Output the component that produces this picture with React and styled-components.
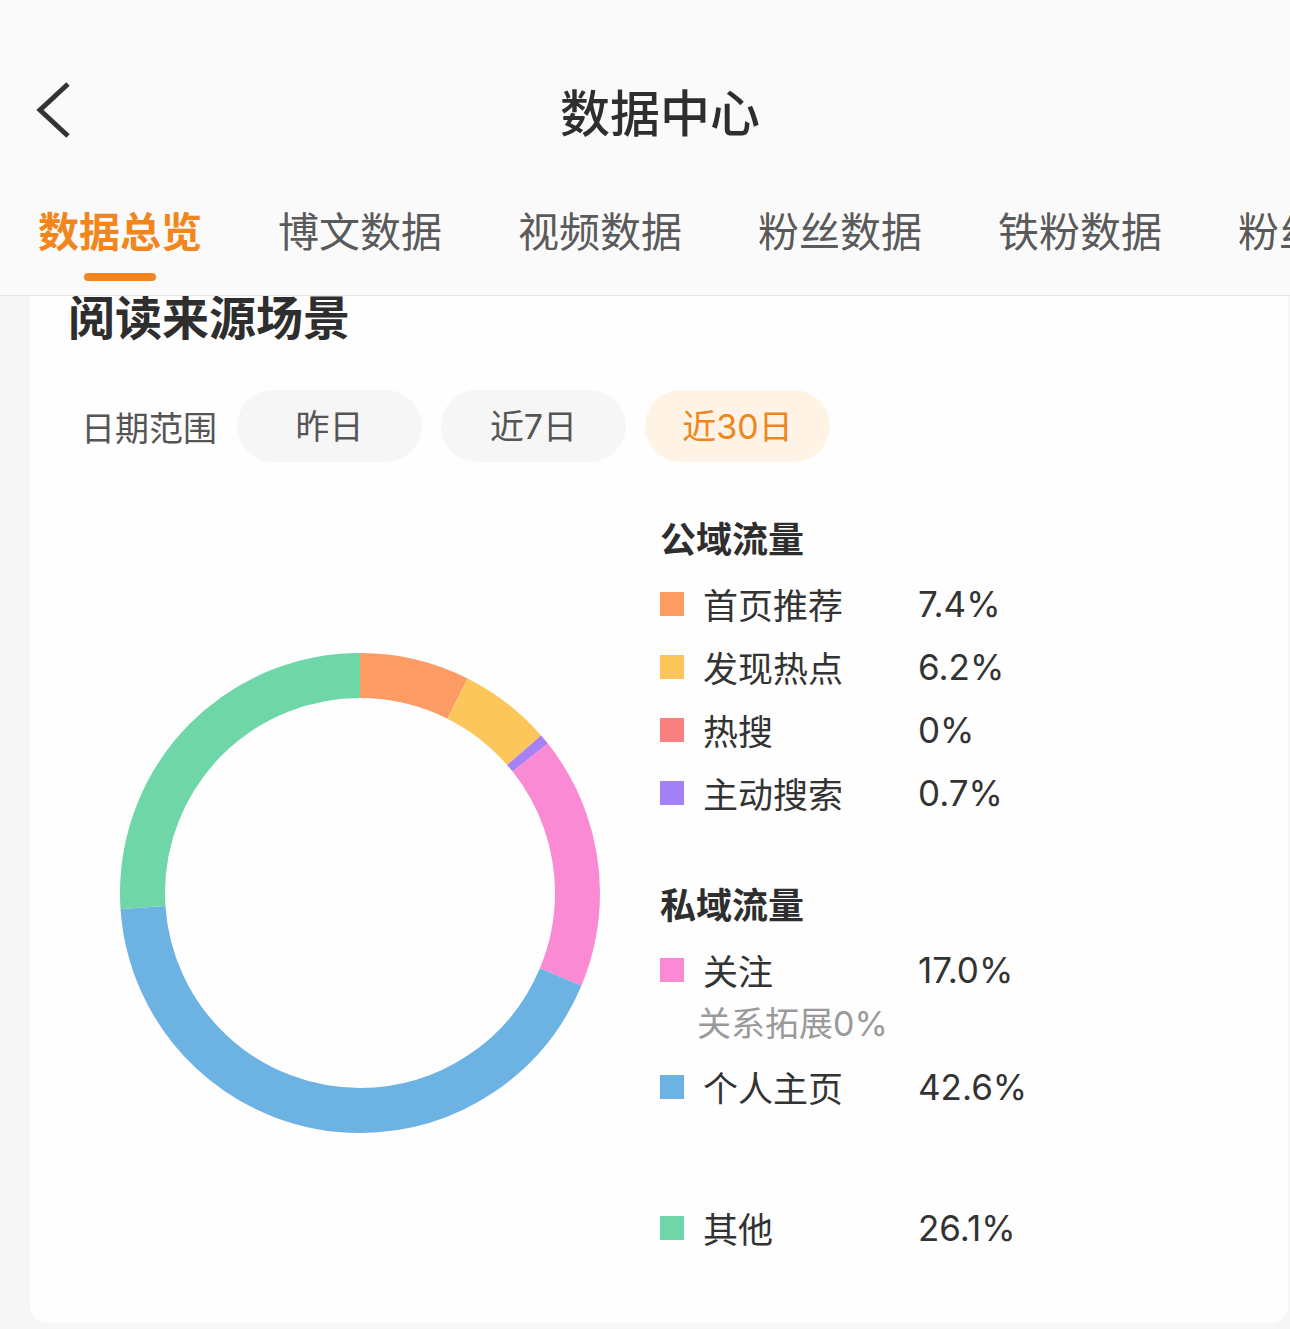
import styled, { createGlobalStyle } from 'styled-components'

const GlobalStyle = createGlobalStyle`
    html, body {
        margin: 0;
        padding: 0;
        background: #f6f6f6;
    }
    body {
        font-family: "Inter", "Noto Sans CJK SC", sans-serif;
        color: #333;
    }
`

const TABS = ['数据总览', '博文数据', '视频数据', '粉丝数据', '铁粉数据', '粉丝画像']
const RANGES = ['昨日', '近7日', '近30日']

const GROUPS = [
    {
        title: '公域流量',
        items: [
            { name: '首页推荐', value: 7.4, color: '#fd9b65' },
            { name: '发现热点', value: 6.2, color: '#fdc65b' },
            { name: '热搜', value: 0, color: '#f98080' },
            { name: '主动搜索', value: 0.7, color: '#a681f5' },
        ],
    },
    {
        title: '私域流量',
        items: [
            { name: '关注', value: 17.0, color: '#fb8ad5', note: '关系拓展0%' },
            { name: '个人主页', value: 42.6, color: '#6cb2e3' },
        ],
    },
    {
        title: '',
        items: [
            { name: '其他', value: 26.1, color: '#6fd6a8' },
        ],
    },
]

const Page = styled.div`
    width: 1290px;
    height: 1329px;
    display: flex;
    flex-direction: column;
    overflow: hidden;
`

const Header = styled.header`
    flex: none;
    background: #fafafa;
    border-bottom: 1px solid #e6e6e6;
    padding-top: 50px;
`

const TitleBar = styled.div`
    height: 120px;
    display: grid;
    grid-template-columns: 120px 1fr 120px;
    align-items: center;

    h1 {
        margin: 0;
        padding-left: 30px;
        text-align: center;
        font-size: 50px;
        font-weight: 500;
        color: #2e2e2e;
        letter-spacing: 0;
    }
`

const BackButton = styled.button`
    border: none;
    background: none;
    padding: 0 0 0 34px;
    height: 60px;
    display: flex;
    align-items: center;
    cursor: pointer;
`

const TabBar = styled.nav`
    height: 125px;
    display: flex;
    gap: 76px;
    padding-left: 38px;
    white-space: nowrap;
`

const Tab = styled.div`
    display: flex;
    flex-direction: column;
    align-items: center;
    padding-top: 34px;
    font-size: 41px;
    line-height: 56px;
    color: ${p => p.active ? '#f0861c' : '#5a5a5a'};
    font-weight: ${p => p.active ? 600 : 400};

    &::after {
        content: '';
        margin-top: 13px;
        width: 72px;
        height: 8px;
        border-radius: 4px;
        background: ${p => p.active ? '#f5841f' : 'transparent'};
    }
`

const Scroll = styled.main`
    flex: 1;
    overflow: hidden;
`

const Card = styled.section`
    margin: -6px 2px 0 30px;
    background: #fefefe;
    border-radius: 0 0 16px 16px;
    padding: 0 0 64px 38px;

    h2 {
        margin: 0;
        font-size: 47px;
        line-height: 56px;
        font-weight: 700;
        color: #2e2e2e;
    }
`

const RangeRow = styled.div`
    display: flex;
    align-items: center;
    gap: 19px;
    margin-top: 44px;
    padding-left: 13px;

    span {
        font-size: 34px;
        color: #555;
        margin-right: 1px;
    }
`

const Pill = styled.button`
    width: 185px;
    height: 72px;
    border: none;
    border-radius: 36px;
    font-family: inherit;
    font-size: 34px;
    padding: 0 0 3px;
    background: ${p => p.active ? '#fff3e6' : '#f6f6f6'};
    color: ${p => p.active ? '#ee861c' : '#555'};
    cursor: pointer;
`

const ChartRow = styled.div`
    display: flex;
    align-items: flex-start;
    margin-top: 47px;
`

const DonutWrap = styled.div`
    margin: 144px 0 0 52px;
    width: 480px;
    height: 480px;
`

const Legend = styled.div`
    margin-left: 60px;
    display: flex;
    flex-direction: column;
`

const Group = styled.div`
    margin-top: ${p => p.gap}px;

    h3 {
        margin: 0;
        height: 63px;
        line-height: 63px;
        font-size: 36px;
        font-weight: 700;
        color: #2e2e2e;
    }
`

const Row = styled.div`
    display: flex;
    align-items: center;
    height: 63px;
    font-size: 35px;
    color: #333;

    i {
        width: 24px;
        height: 24px;
        background: ${p => p.color};
        margin-right: 19px;
    }

    b {
        font-weight: 400;
        width: 215px;
    }
`

const Note = styled.div`
    height: 46px;
    line-height: 46px;
    padding-left: 37px;
    margin-bottom: 8px;
    font-size: 34px;
    color: #9a9a9a;
`

function BackIcon() {
    return (
        <svg width="40" height="60" viewBox="0 0 40 60" fill="none">
            <path d="M34 4 L6 30 L34 56" stroke="#333" strokeWidth="5" strokeLinecap="butt" strokeLinejoin="miter" />
        </svg>
    )
}

function Donut({ data }) {
    const r = 217.5
    const c = 2 * Math.PI * r
    let offset = 0
    return (
        <svg width="480" height="480" viewBox="0 0 480 480">
            <g transform="rotate(-90 240 240)">
                {data.filter(d => d.value > 0).map(d => {
                    const len = (d.value / 100) * c
                    const seg = (
                        <circle
                            key={d.name}
                            cx="240"
                            cy="240"
                            r={r}
                            fill="none"
                            stroke={d.color}
                            strokeWidth="45"
                            strokeDasharray={`${len} ${c - len}`}
                            strokeDashoffset={-offset}
                        />
                    )
                    offset += len
                    return seg
                })}
            </g>
        </svg>
    )
}

export default function App() {
    const all = GROUPS.flatMap(g => g.items)
    const gaps = [0, 51, 78]

    return (
        <Page>
            <GlobalStyle />
            <Header>
                <TitleBar>
                    <BackButton><BackIcon /></BackButton>
                    <h1>数据中心</h1>
                    <div />
                </TitleBar>
                <TabBar>
                    {TABS.map((t, i) => <Tab key={t} active={i === 0}>{t}</Tab>)}
                </TabBar>
            </Header>
            <Scroll>
                <Card>
                    <h2>阅读来源场景</h2>
                    <RangeRow>
                        <span>日期范围</span>
                        {RANGES.map(r => <Pill key={r} active={r === '近30日'}>{r}</Pill>)}
                    </RangeRow>
                    <ChartRow>
                        <DonutWrap><Donut data={all} /></DonutWrap>
                        <Legend>
                            {GROUPS.map((g, gi) => (
                                <Group key={gi} gap={gaps[gi]}>
                                    {g.title && <h3>{g.title}</h3>}
                                    {g.items.map(item => (
                                        <div key={item.name}>
                                            <Row color={item.color}>
                                                <i />
                                                <b>{item.name}</b>
                                                <span>{item.value === 0 ? '0' : item.value.toFixed(1)}%</span>
                                            </Row>
                                            {item.note && <Note>{item.note}</Note>}
                                        </div>
                                    ))}
                                </Group>
                            ))}
                        </Legend>
                    </ChartRow>
                </Card>
            </Scroll>
        </Page>
    )
}
